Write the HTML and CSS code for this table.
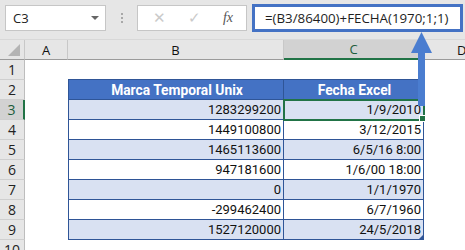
FILE: index.html
```html
<!DOCTYPE html>
<html lang="es">
<head>
  <meta charset="UTF-8">
  <title>Fecha Excel</title>
  <link rel="stylesheet" href="styles.css">
</head>
<body>
  <!-- Barra de fórmulas -->
  <div class="toolbar">
    <div class="namebox">C3<span class="caret"></span></div>
    <div class="grip"><i></i><i></i><i></i></div>
    <div class="fxbox">
      <span class="btn">✕</span>
      <span class="btn">✓</span>
      <span class="fx">fx</span>
    </div>
    <div class="formula">=(B3/86400)+FECHA(1970;1;1)</div>
  </div>

  <!-- Hoja -->
  <div class="sheet">
    <div class="corner"><span></span></div>
    <div class="colhead">A</div>
    <div class="colhead">B</div>
    <div class="colhead active">C</div>
    <div class="colhead last">D</div>

    <div class="rowhead">1</div><div></div><div></div><div></div><div></div>

    <div class="rowhead">2</div><div></div>
    <div class="th first">Marca Temporal Unix</div><div class="th">Fecha Excel</div><div></div>

    <div class="rowhead active">3</div><div></div>
    <div class="td first band">1283299200</div><div class="td band selected">1/9/2010</div><div></div>

    <div class="rowhead">4</div><div></div>
    <div class="td first">1449100800</div><div class="td">3/12/2015</div><div></div>

    <div class="rowhead">5</div><div></div>
    <div class="td first band">1465113600</div><div class="td band">6/5/16 8:00</div><div></div>

    <div class="rowhead">6</div><div></div>
    <div class="td first">947181600</div><div class="td">1/6/00 18:00</div><div></div>

    <div class="rowhead">7</div><div></div>
    <div class="td first band">0</div><div class="td band">1/1/1970</div><div></div>

    <div class="rowhead">8</div><div></div>
    <div class="td first">-299462400</div><div class="td">6/7/1960</div><div></div>

    <div class="rowhead">9</div><div></div>
    <div class="td first band">1527120000</div><div class="td band end">24/5/2018</div><div></div>

    <div class="rowhead">10</div><div></div><div></div><div></div><div></div>
  </div>

  <!-- Flecha que señala la fórmula -->
  <svg class="arrow" width="23" height="76" viewBox="0 0 23 76">
    <polygon points="11.5,1 1,22 22,22" fill="#4a7dd0"/>
    <rect x="8" y="21" width="7" height="54" fill="#4a7dd0"/>
  </svg>
</body>
</html>
```

FILE: styles.css
```css
body {
  margin: 0;
  background: #fff;
  font-family: Roboto, 'Liberation Sans', sans-serif;
  position: relative;
  width: 465px;
  height: 250px;
  overflow: hidden;
}

.toolbar {
  display: flex;
  align-items: flex-start;
  height: 40px;
  background: #e6e6e6;
  padding: 4px 2px 0 5px;
  box-sizing: border-box;
  border-bottom: 1px solid #d8d8d8;
}
.namebox {
  width: 101px;
  height: 26px;
  margin-top: 1px;
  box-sizing: border-box;
  background: #fff;
  border: 1px solid #c6c6c6;
  display: flex;
  align-items: center;
  justify-content: space-between;
  padding: 0 6px 0 7px;
  font-family: 'Open Sans', sans-serif;
  font-size: 13px;
  color: #222;
}
.caret {
  width: 0;
  height: 0;
  border-left: 4px solid transparent;
  border-right: 4px solid transparent;
  border-top: 4px solid #666;
}
.grip {
  width: 31px;
  display: flex;
  flex-direction: column;
  align-items: center;
  gap: 2px;
  padding-top: 9px;
}
.grip i {
  width: 2px;
  height: 2px;
  background: #a8a8a8;
}
.fxbox {
  width: 110px;
  height: 26px;
  margin-top: 1px;
  box-sizing: border-box;
  background: #fff;
  border: 1px solid #c6c6c6;
  display: flex;
  align-items: center;
  justify-content: space-around;
  padding: 0 2px 0 4px;
  color: #cacaca;
  font-size: 15px;
}
.fx {
  font-family: 'Liberation Serif', serif;
  font-style: italic;
  color: #555;
  font-size: 14px;
}
.formula {
  margin-left: 5px;
  width: 211px;
  height: 28px;
  box-sizing: border-box;
  border: 3px solid #4472c4;
  background: #fff;
  padding: 1px 0 0 10px;
  font-family: 'Open Sans', sans-serif;
  font-size: 13.3px;
  line-height: 20px;
  color: #1e1e1e;
  white-space: nowrap;
}

.sheet {
  display: grid;
  grid-template-columns: 25px 43px 216px 140px 41px;
  grid-auto-rows: 20px;
  font-size: 13px;
}
.sheet > div {
  box-sizing: border-box;
}

/* cabeceras de columnas y filas */
.corner,
.colhead {
  background: #e6e6e6;
  border-bottom: 1px solid #9b9b9b;
}
.corner {
  border-right: 1px solid #c8c8c8;
  position: relative;
}
.corner span {
  position: absolute;
  right: 4px;
  bottom: 3px;
  width: 0;
  height: 0;
  border-left: 12px solid transparent;
  border-bottom: 12px solid #b4b4b4;
}
.colhead {
  display: flex;
  align-items: center;
  justify-content: center;
  border-right: 1px solid #c8c8c8;
  font-family: 'Open Sans', sans-serif;
  font-size: 13px;
  color: #111;
}
.colhead.active {
  background: #d2d2d2;
  border-bottom: 2px solid #217346;
  color: #1d5d3b;
}
.colhead.last {
  border-right: none;
  justify-content: flex-start;
  padding-left: 33px;
}
.rowhead {
  background: #e6e6e6;
  border-right: 1px solid #bdbdbd;
  border-bottom: 1px solid #cfcfcf;
  display: flex;
  align-items: center;
  justify-content: center;
  font-family: 'Open Sans', sans-serif;
  font-size: 14px;
  color: #222;
}
.rowhead.active {
  background: #d2d2d2;
  border-right: 2px solid #217346;
  color: #1d5d3b;
}

/* tabla */
.th,
.td {
  border-bottom: 1px solid #2f5597;
  border-right: 1px solid #2f5597;
  display: flex;
  align-items: center;
  padding: 0 2px 0 4px;
  color: #111;
  white-space: nowrap;
}
.th {
  background: #4472c4;
  color: #fff;
  font-weight: bold;
  font-size: 13.8px;
  justify-content: center;
  border-top: 1px solid #2f5597;
  margin-top: -1px;
  height: 21px;
}
.td {
  justify-content: flex-end;
}
.first {
  border-left: 1px solid #2f5597;
}
.band {
  background: #d9e1f2;
}
.selected {
  position: relative;
  outline: 2px solid #217346;
  outline-offset: -1px;
  z-index: 1;
}
.selected::after {
  content: "";
  position: absolute;
  right: -3px;
  bottom: -3px;
  width: 5px;
  height: 5px;
  background: #217346;
  border: 1px solid #fff;
}
.end {
  position: relative;
}
.end::after {
  content: "";
  position: absolute;
  right: 0;
  bottom: 0;
  border-left: 4px solid transparent;
  border-bottom: 4px solid #2f5597;
}

.arrow {
  position: absolute;
  left: 410px;
  top: 31px;
  z-index: 2;
}
```
